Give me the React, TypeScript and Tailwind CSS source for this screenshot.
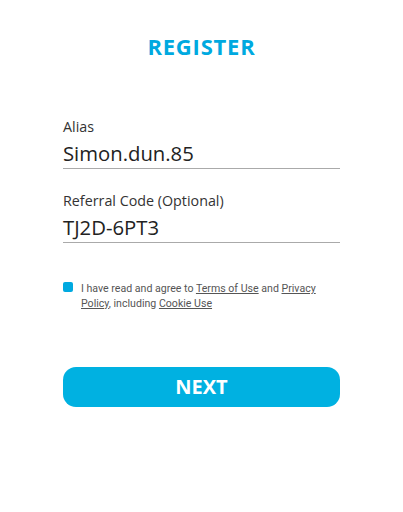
export default function App() {
  return (
    <div className="w-[403px] h-[512px] bg-white font-['Open_Sans',sans-serif]">
      <div className="px-[63px] pt-[33px]">
        <h1 className="text-center text-[22px] leading-[26px] font-bold tracking-[0.8px] text-[#00a9e0]">
          REGISTER
        </h1>

        <div className="mt-[59px]">
          <label className="block text-[14.3px] leading-[18px] text-[#333]">Alias</label>
          <div className="mt-[5px] border-b border-[#aaa] pb-[3px] text-[20.3px] leading-[24px] text-[#222]">
            Simon.dun.85
          </div>
        </div>

        <div className="mt-[23px]">
          <label className="block text-[14.3px] leading-[18px] text-[#333]">Referral Code (Optional)</label>
          <div className="mt-[5px] border-b border-[#aaa] pb-[3px] text-[20.3px] leading-[24px] text-[#222]">
            TJ2D-6PT3
          </div>
        </div>

        <div className="mt-[38px] flex items-start gap-[8px] font-['Roboto',sans-serif] text-[10.6px] leading-[15px] text-[#555]">
          <span className="mt-[1px] h-[10px] w-[10px] shrink-0 rounded-[2px] bg-[#00a9e0]" />
          <p>
            I have read and agree to <span className="underline">Terms of Use</span> and{" "}
            <span className="underline">Privacy Policy</span>, including{" "}
            <span className="underline">Cookie Use</span>
          </p>
        </div>

        <button className="mt-[56px] flex h-[40px] w-full items-center justify-center rounded-[13px] bg-[#00b1e1] text-[20px] font-bold text-white">
          NEXT
        </button>
      </div>
    </div>
  );
}
